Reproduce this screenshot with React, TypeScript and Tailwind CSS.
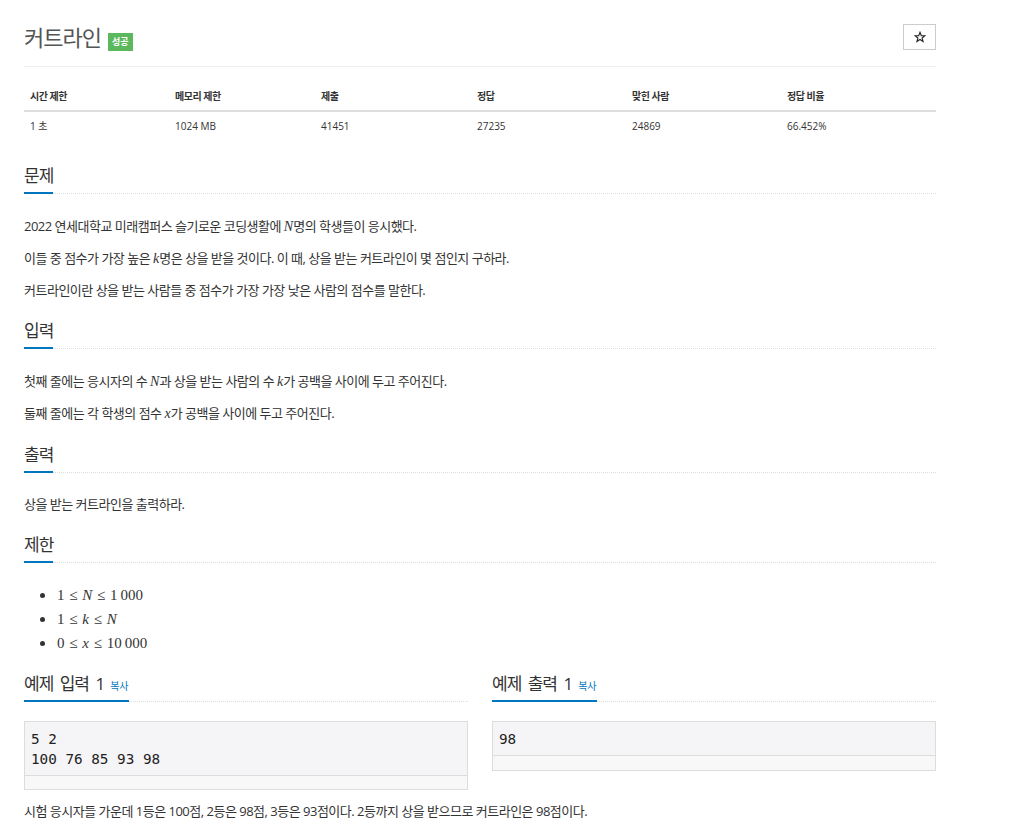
import React from "react";

function M({ children }: { children: React.ReactNode }) {
  return <span className="font-['Liberation_Serif',serif] text-[15px] leading-none tracking-normal [word-spacing:1px]">{children}</span>;
}

function V({ children }: { children: React.ReactNode }) {
  return <i className="font-['Liberation_Serif',serif] text-[14px] leading-none tracking-normal">{children}</i>;
}

function Heading({ children }: { children: React.ReactNode }) {
  return (
    <div className="flex border-b border-dotted border-[#dddddd]">
      <h2 className="-mb-px flex h-[30px] items-baseline border-b-2 border-[#0076c0] pb-[4px] text-[17px] leading-[24px] tracking-[-1px] text-[#333] [word-spacing:3px]">
        {children}
      </h2>
    </div>
  );
}

const cols = [
  ["시간 제한", "1 초"],
  ["메모리 제한", "1024 MB"],
  ["제출", "41451"],
  ["정답", "27235"],
  ["맞힌 사람", "24869"],
  ["정답 비율", "66.452%"],
];

function Dot() {
  return <span className="mr-[12px] ml-[16px] inline-block h-[5px] w-[5px] rounded-full bg-[#333]" />;
}

export default function App() {
  return (
    <div className="min-h-[838px] bg-white px-[24px] text-[#333] font-['Open_Sans','Noto_Sans_CJK_KR',sans-serif]">
      <div className="w-[912px]">
        {/* title */}
        <div className="flex items-center justify-between border-b border-[#eeeeee] pb-[12px] pt-[20px]">
          <div className="flex items-end">
            <h1 className="text-[22px] leading-[34px] tracking-[-1px] text-[#555]">커트라인</h1>
            <span className="mb-[3px] ml-[7px] h-[18px] bg-[#5cb85c] px-[4px] text-[9px] font-bold leading-[18px] text-white">
              성공
            </span>
          </div>
          <button className="flex h-[26px] w-[33px] items-center justify-center border border-[#cccccc] bg-white">
            <svg width="12" height="12" viewBox="0 0 24 24" fill="none" stroke="#222" strokeWidth="2.2" strokeLinejoin="miter">
              <polygon points="12,2.5 14.6,9.3 21.8,9.5 16.2,14 18.1,21 12,17 5.9,21 7.8,14 2.2,9.5 9.4,9.3" />
            </svg>
          </button>
        </div>

        {/* table */}
        <div className="mt-[15px] text-[10px]">
          <div className="grid h-[30px] grid-cols-[145px_146px_156px_155px_155px_155px] items-center border-b-2 border-[#dddddd] font-bold tracking-[-0.5px]">
            {cols.map((c) => (
              <div key={c[0]} className="pl-[6px]">
                {c[0]}
              </div>
            ))}
          </div>
          <div className="grid h-[29px] grid-cols-[145px_146px_156px_155px_155px_155px] items-center">
            {cols.map((c) => (
              <div key={c[0]} className="pl-[6px]">
                {c[1]}
              </div>
            ))}
          </div>
        </div>

        {/* 문제 */}
        <section className="mt-[23px]">
          <Heading>문제</Heading>
          <div className="space-y-[10px] pt-[21px] text-[13px] leading-[22px] tracking-[-0.5px]">
            <p className="h-[22px]">
              2022 연세대학교 미래캠퍼스 슬기로운 코딩생활에 <V>N</V>명의 학생들이 응시했다.
            </p>
            <p className="h-[22px]">
              이들 중 점수가 가장 높은 <V>k</V>명은 상을 받을 것이다. 이 때, 상을 받는 커트라인이 몇 점인지 구하라.
            </p>
            <p className="h-[22px]">커트라인이란 상을 받는 사람들 중 점수가 가장 가장 낮은 사람의 점수를 말한다.</p>
          </div>
        </section>

        {/* 입력 */}
        <section className="mt-[18px]">
          <Heading>입력</Heading>
          <div className="space-y-[10px] pt-[21px] text-[13px] leading-[22px] tracking-[-0.5px]">
            <p className="h-[22px]">
              첫째 줄에는 응시자의 수 <V>N</V>과 상을 받는 사람의 수 <V>k</V>가 공백을 사이에 두고 주어진다.
            </p>
            <p className="h-[22px]">
              둘째 줄에는 각 학생의 점수 <V>x</V>가 공백을 사이에 두고 주어진다.
            </p>
          </div>
        </section>

        {/* 출력 */}
        <section className="mt-[19px]">
          <Heading>출력</Heading>
          <div className="pt-[20px] text-[13px] leading-[22px] tracking-[-0.5px]">
            <p className="h-[22px]">상을 받는 커트라인을 출력하라.</p>
          </div>
        </section>

        {/* 제한 */}
        <section className="mt-[18px]">
          <Heading>제한</Heading>
          <ul className="pt-[20px] text-[12px] leading-[24px]">
            <li className="flex h-[24px] items-center">
              <Dot />
              <M>
                1 ≤ <i>N</i> ≤ 1&thinsp;000
              </M>
            </li>
            <li className="flex h-[24px] items-center">
              <Dot />
              <M>
                1 ≤ <i>k</i> ≤ <i>N</i>
              </M>
            </li>
            <li className="flex h-[24px] items-center">
              <Dot />
              <M>
                0 ≤ <i>x</i> ≤ 10&thinsp;000
              </M>
            </li>
          </ul>
        </section>

        {/* 예제 */}
        <div className="mt-[17px] grid grid-cols-[444px_444px] gap-[24px]">
          <div>
            <Heading>
              예제 입력 1<span className="ml-[6px] text-[10px] tracking-normal text-[#0076c0]">복사</span>
            </Heading>
            <div className="mt-[19px] border border-[#dddddd]">
              <pre className="border-b border-[#dddddd] bg-[#f5f5f7] px-[6px] pb-[6px] pt-[7px] text-[14.3px] leading-[20px] text-[#222] font-['DejaVu_Sans_Mono',monospace]">
                {"5 2\n100 76 85 93 98"}
              </pre>
              <div className="h-[13px] bg-[#f8f8f9]" />
            </div>
          </div>
          <div>
            <Heading>
              예제 출력 1<span className="ml-[6px] text-[10px] tracking-normal text-[#0076c0]">복사</span>
            </Heading>
            <div className="mt-[19px] border border-[#dddddd]">
              <pre className="border-b border-[#dddddd] bg-[#f5f5f7] px-[6px] pb-[6px] pt-[7px] text-[14.3px] leading-[20px] text-[#222] font-['DejaVu_Sans_Mono',monospace]">
                {"98"}
              </pre>
              <div className="h-[14px] bg-[#f8f8f9]" />
            </div>
          </div>
        </div>

        <p className="mt-[10px] h-[22px] text-[13px] leading-[22px] tracking-[-0.5px]">
          시험 응시자들 가운데 1등은 100점, 2등은 98점, 3등은 93점이다. 2등까지 상을 받으므로 커트라인은 98점이다.
        </p>
      </div>
    </div>
  );
}
